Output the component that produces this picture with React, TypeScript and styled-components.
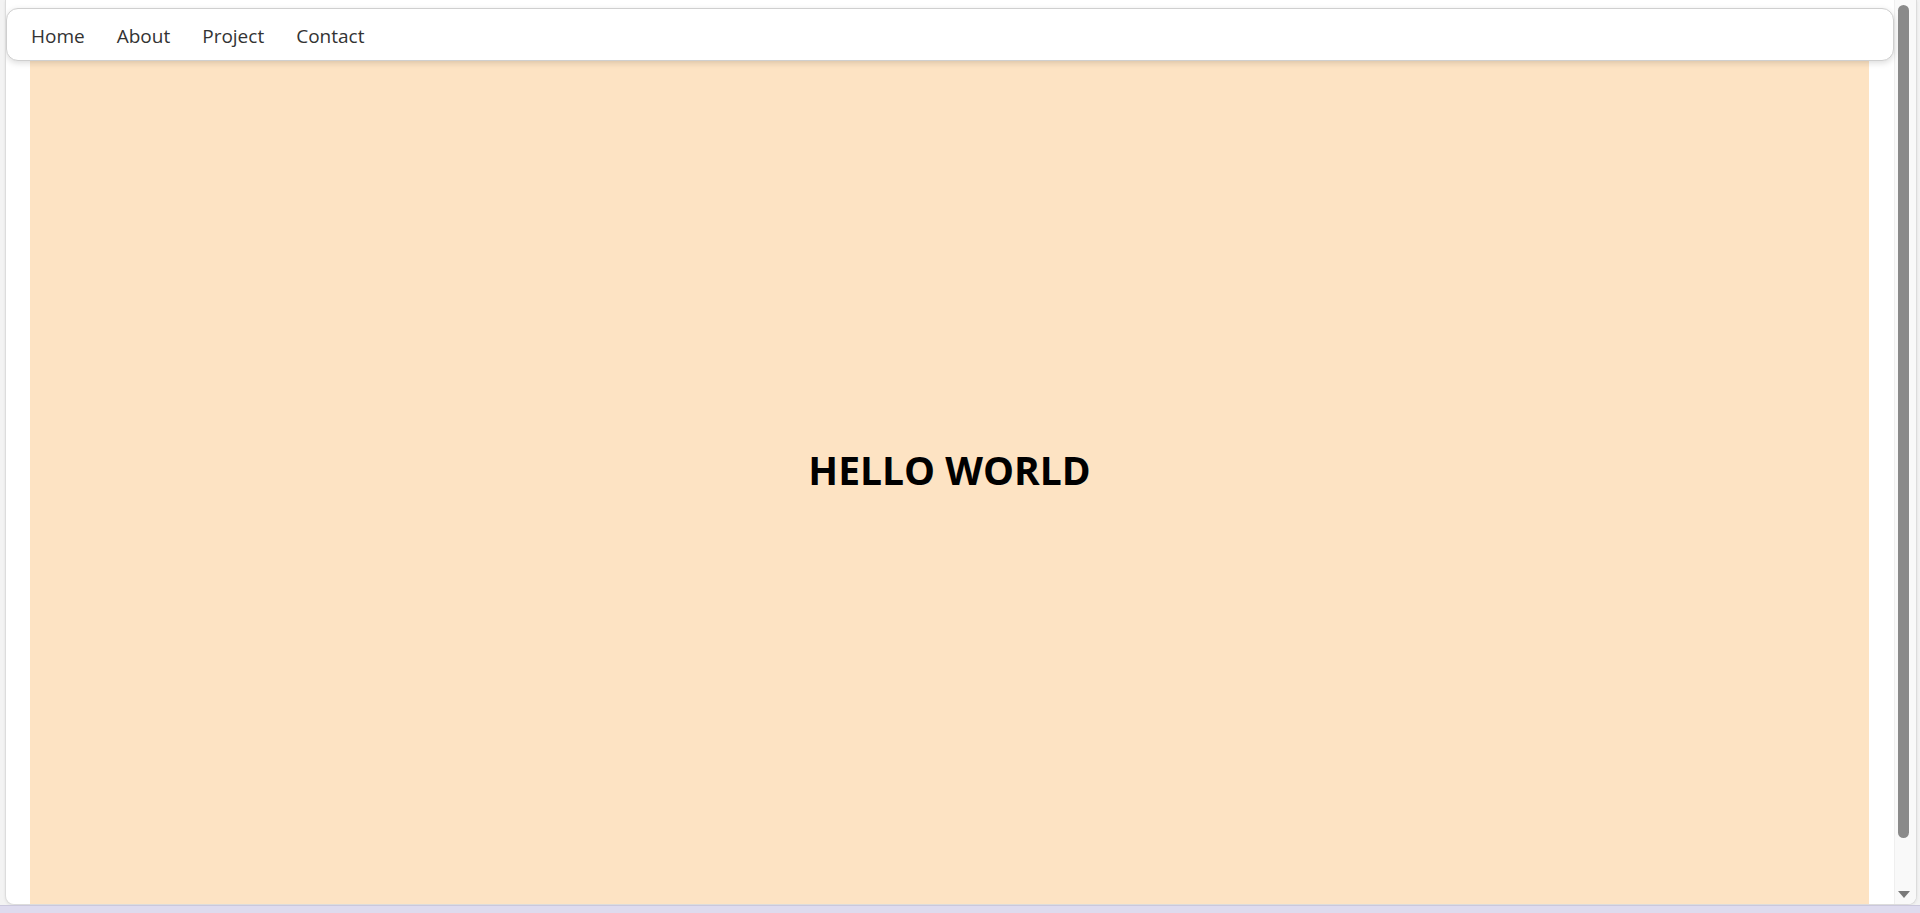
import React from "react"
import styled, { createGlobalStyle } from "styled-components"

const GlobalStyle = createGlobalStyle`
  html, body {
    margin: 0;
    padding: 0;
    height: 100%;
    overflow: hidden;
  }
  body {
    font-family: "Open Sans", "Noto Sans", sans-serif;
    background: #f3f3f3;
  }
`

const Screen = styled.div`
  height: 913px;
  display: flex;
  flex-direction: column;
  background: #f3f3f3;
`

const Frame = styled.div`
  flex: 1;
  display: flex;
  margin: 0 3px 0 5px;
  background: #fff;
  border: 1px solid #dcdcdc;
  border-top: none;
  border-radius: 0 0 9px 9px;
  overflow: hidden;
  box-shadow: 0 1px 3px rgba(0, 0, 0, 0.08);
`

const Viewport = styled.div`
  flex: 1;
  position: relative;
  display: flex;
  padding: 60px 25px 0 24px;
`

const Navbar = styled.nav`
  position: absolute;
  top: 8px;
  left: 0;
  right: 0;
  height: 53px;
  box-sizing: border-box;
  display: flex;
  align-items: center;
  gap: 32px;
  padding: 3px 24px 0 24px;
  background: #fff;
  border: 1px solid #cfcfcf;
  border-radius: 12px;
  box-shadow: 0 2px 6px rgba(0, 0, 0, 0.14);
  z-index: 2;
`

const NavLink = styled.a`
  color: #333;
  font-size: 19px;
  text-decoration: none;
  cursor: pointer;
`

const Hero = styled.section`
  flex: 1;
  display: flex;
  align-items: center;
  justify-content: center;
  padding-bottom: 26px;
  background: #fde3c3;
`

const Heading = styled.h1`
  margin: 0;
  font-size: 39px;
  font-weight: 700;
  line-height: 1;
  color: #000;
`

const Scrollbar = styled.div`
  width: 21px;
  position: relative;
  background: #f9f9f9;
  border-left: 1px solid #efefef;
`

const Thumb = styled.div`
  position: absolute;
  top: 5px;
  left: 3px;
  width: 11px;
  height: 833px;
  border-radius: 6px;
  background: #8a8a8a;
`

const Arrow = styled.div`
  position: absolute;
  bottom: 6px;
  left: 3px;
  width: 0;
  height: 0;
  border-left: 6px solid transparent;
  border-right: 6px solid transparent;
  border-top: 7px solid #7a7a7a;
`

const Taskbar = styled.div`
  height: 7px;
  background: #dedbee;
  border-top: 1px solid #cbc8dc;
`

const links = ["Home", "About", "Project", "Contact"]

const App = () => {
  return (
    <>
      <GlobalStyle />
      <Screen>
        <Frame>
          <Viewport>
            <Navbar>
              {links.map((l) => (
                <NavLink key={l}>{l}</NavLink>
              ))}
            </Navbar>
            <Hero>
              <Heading>HELLO WORLD</Heading>
            </Hero>
          </Viewport>
          <Scrollbar>
            <Thumb />
            <Arrow />
          </Scrollbar>
        </Frame>
        <Taskbar />
      </Screen>
    </>
  )
}

export default App
